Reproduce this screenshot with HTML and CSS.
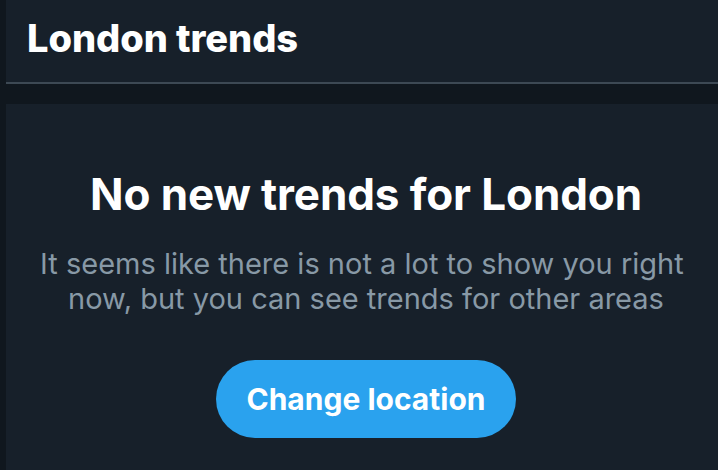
FILE: index.html
```html
<!DOCTYPE html>
<html>
<head>
<meta charset="utf-8">
<link rel="stylesheet" href="styles.css">
</head>
<body>
<div class="page">
  <header class="header">
    <h2 class="header-title">London trends</h2>
  </header>
  <section class="empty">
    <h1 class="empty-title">No new trends for London</h1>
    <p class="empty-text">It seems like there is not a lot to show you right now, but you can see trends for other areas</p>
    <button class="btn">Change location</button>
  </section>
</div>
</body>
</html>
```
FILE: styles.css
```css
html, body {
  margin: 0;
  padding: 0;
  background: #10171e;
  height: 100%;
  overflow: hidden;
}
.page {
  padding-left: 6px;
  display: flex;
  flex-direction: column;
  gap: 20px;
  height: 100%;
  font-family: Inter, "Liberation Sans", sans-serif;
}
.header {
  background: #17202a;
  border-bottom: 2px solid #3d4954;
  display: flex;
  align-items: center;
  padding-left: 21px;
  box-sizing: border-box;
  height: 84px;
}
.header-title {
  margin: 0;
  color: #ffffff;
  font-size: 38px;
  font-weight: 800;
  letter-spacing: -0.05px;
  padding-bottom: 6px;
}
.empty {
  flex: 1;
  background: #17202a;
  display: flex;
  flex-direction: column;
  align-items: center;
  padding-top: 63px;
  padding-left: 8px;
}
.empty-title {
  margin: 0;
  color: #ffffff;
  font-size: 44px;
  font-weight: 700;
  letter-spacing: -0.1px;
}
.empty-text {
  margin: 25px 0 0;
  color: #8899a6;
  font-size: 29px;
  line-height: 35px;
  text-align: center;
  max-width: 680px;
  white-space: break-spaces;
}
.btn {
  margin-top: 44px;
  background: #2aa2ee;
  color: #ffffff;
  border: none;
  border-radius: 39px;
  height: 78px;
  width: 300px;
  font-family: Inter, "Liberation Sans", sans-serif;
  font-size: 30px;
  font-weight: 700;
}
```
